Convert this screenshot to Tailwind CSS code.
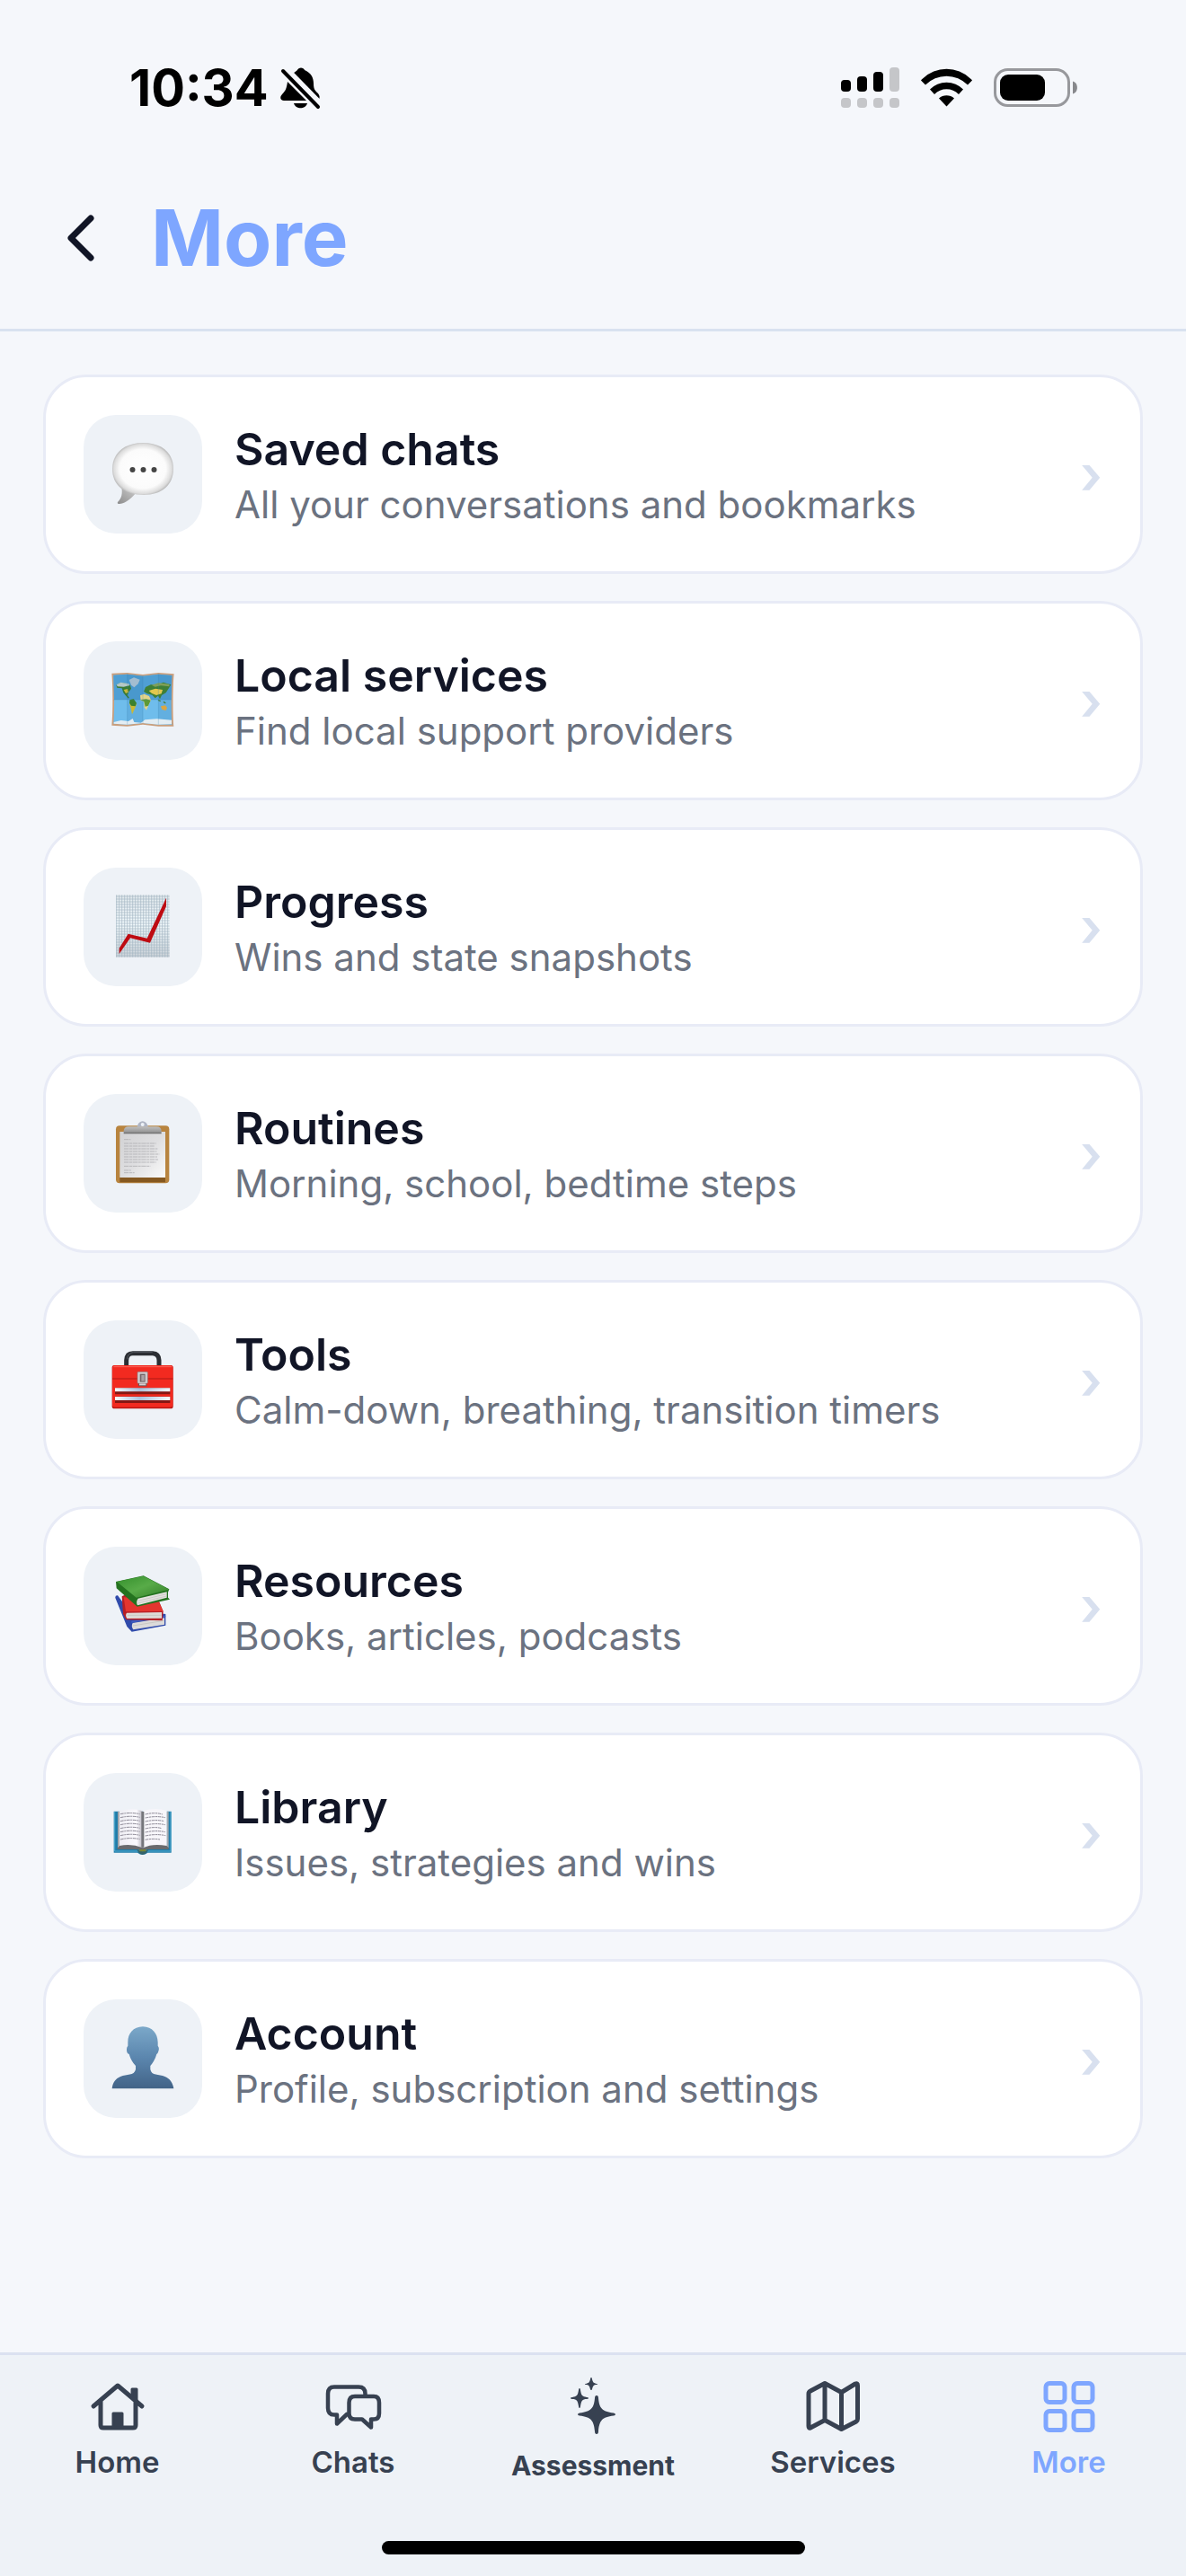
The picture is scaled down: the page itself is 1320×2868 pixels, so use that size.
<!DOCTYPE html>
<html lang="en">

<head>
    <meta charset="UTF-8">
    <meta name="viewport" content="width=device-width, initial-scale=1.0">
    <script src="https://cdn.jsdelivr.net/npm/@tailwindcss/browser@4"></script>
    <title>More</title>
</head>

<body class="flex flex-col min-h-screen bg-[#f5f7fb] font-['Inter',sans-serif] text-[#111526]">
    <!-- Status bar -->
    <div class="flex items-center justify-between h-44 pt-5 pl-36 pr-30 text-black">
        <div class="flex items-center gap-3">
            <span class="text-[56px] leading-16 font-bold">10:34</span>
            <svg class="w-12 h-12" viewBox="0 0 48 48" fill="currentColor" aria-label="Silent">
                <path d="M15 8C17 6 19 5 20 4C21 .5 27 .5 28 4C35 7 38 12 38 19C38 26 40 27 43 30C45 33 45 34 44 37Z" />
                <path d="M9 17L30 38H5C1 38 0 34 3 31C7 27 8 24 9 17Z" />
                <path d="M16 41H31C29 48 18 48 16 41Z" />
                <path d="M6 3L46 44" fill="none" stroke="#f5f7fb" stroke-width="9" />
                <path d="M4 5L43 45" fill="none" stroke="currentColor" stroke-width="4" stroke-linecap="round" />
            </svg>
        </div>
        <div class="flex items-center gap-6">
            <svg class="w-[65px] h-12" viewBox="0 0 65 48" aria-label="Signal">
                <rect x="0" y="15" width="11" height="13" rx="4" />
                <rect x="18" y="11" width="11" height="17" rx="4" />
                <rect x="36" y="6" width="11" height="22" rx="4" />
                <g fill="#c5c6c9">
                    <rect x="54" y="1" width="11" height="27" rx="4" />
                    <rect x="0" y="35" width="11" height="11" rx="4" />
                    <rect x="18" y="35" width="11" height="11" rx="4" />
                    <rect x="36" y="35" width="11" height="11" rx="4" />
                    <rect x="54" y="35" width="11" height="11" rx="4" />
                </g>
            </svg>
            <svg class="w-[57px] h-12" viewBox="0 0 57 48" aria-label="Wi-Fi">
                <path d="M0 15.500Q1 14 2 13.500A38 38 0 0 1 55 13.500Q56 14 57 15.500L52 20.500A33 33 0 0 0 5 20.500Z" />
                <path d="M10 25.500A26 26 0 0 1 47 25.500L42 31A19 19 0 0 0 15 31Z" />
                <path d="M20 35.500A13 13 0 0 1 37 35.500L28.500 44.500Z" />
            </svg>
            <svg class="w-[94px] h-12" viewBox="0 0 94 48" aria-label="Battery">
                <rect x="1.500" y="3.500" width="82" height="40" rx="14" fill="none" stroke="#97989c" stroke-width="3" />
                <rect x="7" y="9" width="50" height="29" rx="9" />
                <path d="M88 16.500C94.500 18 94.500 29 88 30.500Z" fill="#87888c" />
            </svg>
        </div>
    </div>

    <header class="flex items-center gap-12 h-[193px] px-12 pb-3 border-b-3 border-[#d9e2f0]">
        <button type="button" class="flex justify-center w-[72px]" aria-label="Back">
            <svg class="w-[72px] h-[72px]" viewBox="0 0 72 72" fill="none" stroke="currentColor" stroke-width="7" stroke-linecap="round" stroke-linejoin="round">
                <path d="M53 14L31 36L53 58" />
            </svg>
        </button>
        <h1 class="text-[87px] leading-24 font-bold text-[#7ea6ff]">More</h1>
    </header>

    <main class="flex flex-col flex-1 gap-[30px] px-12 py-12">
        <a href="#saved-chats" class="flex items-center gap-9 p-[42px] bg-white border-3 border-[#e8ebf6] rounded-[48px]">
            <span class="size-33 shrink-0 rounded-[36px] bg-[#eef2f7]">
                <svg viewBox="0 0 132 132">
                    <defs>
                        <radialGradient id="bubble" cx="50%" cy="50%" r="54%">
                            <stop offset="0" stop-color="#fff" />
                            <stop offset=".7" stop-color="#fbfbfb" />
                            <stop offset=".88" stop-color="#dcdcdc" />
                            <stop offset="1" stop-color="#a3a3a3" />
                        </radialGradient>
                        <linearGradient id="tail" x1="0" y1="1" x2="1" y2="0">
                            <stop offset="0" stop-color="#8c8c8c" />
                            <stop offset="1" stop-color="#d2d2d2" />
                        </linearGradient>
                    </defs>
                    <path d="M42 79C44 88 42 93 38 97Q37 99 40 99C48 98 54 92 60 85Z" fill="url(#tail)" />
                    <path d="M66 31C88 31 100 43 100 60C100 78 87 89 67 89C45 89 32 78 32 60C32 43 45 31 66 31Z" fill="url(#bubble)" />
                    <g fill="#454545">
                        <circle cx="54.500" cy="61" r="3" />
                        <circle cx="66.500" cy="61" r="3" />
                        <circle cx="78.500" cy="61" r="3" />
                    </g>
                </svg>
            </span>
            <span class="flex flex-col flex-1 pt-1">
                <span class="text-[50px] leading-16 font-semibold">Saved chats</span>
                <span class="text-[42px] leading-15 text-[#6b7280]">All your conversations and bookmarks</span>
            </span>
            <span class="text-[60px] leading-18 font-semibold text-[#d8e0ef]">›</span>
        </a>

        <a href="#local-services" class="flex items-center gap-9 p-[42px] bg-white border-3 border-[#e8ebf6] rounded-[48px]">
            <span class="size-33 shrink-0 rounded-[36px] bg-[#eef2f7]">
                <svg viewBox="40 42 396 396">
                    <path d="M134 149L186 147L238 153L290 147L342 151C338 180 337 290 341 326L290 326L238 320L186 326L134 323C138 280 138 190 134 149Z" fill="#c99e7c" />
                    <path d="M140 155L186 152L238 158L290 152L335 156C332 190 332 285 335 320L290 320L238 315L186 320L140 317C143 280 143 190 140 155Z" fill="#6fbdec" />
                    <path d="M140 155L186 152L238 158L290 152L335 156L333 237H142Z" fill="#4f9fd4" />
                    <path d="M186 152L238 158V315L186 320Z M290 152L335 156C332 190 332 285 335 320L290 320Z" fill="#377fb5" opacity=".22" />
                    <path d="M141 312L165 306L190 309L204 300L209 312L232 314L245 304L285 301L334 305V319L290 320L238 315L186 320L141 317Z" fill="#e3edf3" />
                    <path d="M192 171L208 163L228 170L222 184L209 196L199 188Z" fill="#a3bdd0" />
                    <path d="M149 188L163 180L184 183L196 190L199 200L191 211L187 222L193 232L188 232L173 214L168 199L152 197Z" fill="#387a35" />
                    <path d="M150 187L164 179L191 184L193 190L174 194L153 193Z" fill="#b5c8c6" />
                    <path d="M174 204L187 201L190 212L181 216Z M196 240L208 239L217 252L211 267L202 286L198 266L193 250Z" fill="#cab936" />
                    <path d="M194 238L207 234L217 248L213 259L199 257L193 248Z" fill="#3b812f" />
                    <path d="M229 223L242 218L259 225L265 238L257 255L250 272L243 263L242 244L231 239Z" fill="#e4d488" />
                    <path d="M230 238L249 235L264 239L256 257L246 260L242 243Z" fill="#5d9937" />
                    <path d="M241 210L247 195L264 187L289 187L306 179L332 187L325 198L315 214L301 222L295 235L289 224L279 232L269 221L252 217Z" fill="#3e7f36" />
                    <path d="M258 207L280 200L304 204L300 217L283 222L268 216Z" fill="#e1c74e" />
                    <path d="M267 188L290 181L326 185L327 193L298 190L279 194Z" fill="#7f9f58" />
                    <path d="M298 259L313 256L319 264L315 273L302 270Z" fill="#dba642" />
                    <path d="M289 238L297 242M307 244L314 249" stroke="#427e3b" stroke-width="4" />
                    <path d="M140 237H334M186 152V320M238 158V315M290 152V320" stroke="#3c81ad" stroke-width="1.500" opacity=".5" />
                </svg>
            </span>
            <span class="flex flex-col flex-1 pt-1">
                <span class="text-[50px] leading-16 font-semibold">Local services</span>
                <span class="text-[42px] leading-15 text-[#6b7280]">Find local support providers</span>
            </span>
            <span class="text-[60px] leading-18 font-semibold text-[#d8e0ef]">›</span>
        </a>

        <a href="#progress" class="flex items-center gap-9 p-[42px] bg-white border-3 border-[#e8ebf6] rounded-[48px]">
            <span class="size-33 shrink-0 rounded-[36px] bg-[#eef2f7]">
                <svg viewBox="40 48 396 396">
                    <defs>
                        <linearGradient id="paper" x1="0" y1="0" x2="0" y2="1">
                            <stop offset="0" stop-color="#e2e9ed" />
                            <stop offset=".45" stop-color="#f2fafd" />
                            <stop offset="1" stop-color="#ccd3d9" />
                        </linearGradient>
                    </defs>
                    <path d="M148 139H327V347H148Z" fill="url(#paper)" />
                    <path d="M150 139V347M159 139V347M168 139V347M177 139V347M186 139V347M195 139V347M204 139V347M213 139V347M222 139V347M231 139V347M240 139V347M249 139V347M258 139V347M267 139V347M276 139V347M285 139V347M294 139V347M303 139V347M312 139V347M321 139V347" stroke="#a3b5c2" stroke-width="2" />
                    <path d="M148 144H327M148 153H327M148 162H327M148 171H327M148 180H327M148 189H327M148 198H327M148 207H327M148 216H327M148 225H327M148 234H327M148 243H327M148 252H327M148 261H327M148 270H327M148 279H327M148 288H327M148 297H327M148 306H327M148 315H327M148 324H327M148 333H327M148 342H327" stroke="#a3b5c2" stroke-width="2" />
                    <path d="M159 317L189 269L252 284L316 149V177L262 299L196 283L159 336Z" fill="#be0b12" />
                </svg>
            </span>
            <span class="flex flex-col flex-1 pt-1">
                <span class="text-[50px] leading-16 font-semibold">Progress</span>
                <span class="text-[42px] leading-15 text-[#6b7280]">Wins and state snapshots</span>
            </span>
            <span class="text-[60px] leading-18 font-semibold text-[#d8e0ef]">›</span>
        </a>

        <a href="#routines" class="flex items-center gap-9 p-[42px] bg-white border-3 border-[#e8ebf6] rounded-[48px]">
            <span class="size-33 shrink-0 rounded-[36px] bg-[#eef2f7]">
                <svg viewBox="40 54 396 396">
                    <defs>
                        <linearGradient id="sheet" x1="0" y1="0" x2="1" y2="1">
                            <stop offset="0" stop-color="#d2d2d4" />
                            <stop offset=".5" stop-color="#dedee0" />
                            <stop offset="1" stop-color="#fafafa" />
                        </linearGradient>
                        <linearGradient id="clip" x1="0" y1="0" x2="0" y2="1">
                            <stop offset="0" stop-color="#bebebe" />
                            <stop offset=".7" stop-color="#999" />
                            <stop offset="1" stop-color="#636363" />
                        </linearGradient>
                    </defs>
                    <rect x="148" y="160" width="178" height="192" rx="12" fill="#b8843f" />
                    <path d="M161 332H313V349H161Z" fill="#855820" />
                    <path d="M161 180H313V333H161Z" fill="url(#sheet)" />
                    <path d="M175 206H197M175 219H282M175 228H276M175 237H287M175 246H284M175 255H293M175 264H286M175 273H289M175 282H282M175 295H263M175 309H198M175 317H210" stroke="#b0b0b3" stroke-width="2.500" stroke-dasharray="16 2 9 2" />
                    <path d="M218 164C222 161 220 147 237 145C254 147 252 161 257 164Z" fill="#aeb4c3" />
                    <circle cx="237" cy="156" r="6" fill="#eef2f7" />
                    <path d="M174 187V178Q175 163 190 163H284Q299 163 300 178V187Z" fill="url(#clip)" />
                </svg>
            </span>
            <span class="flex flex-col flex-1 pt-1">
                <span class="text-[50px] leading-16 font-semibold">Routines</span>
                <span class="text-[42px] leading-15 text-[#6b7280]">Morning, school, bedtime steps</span>
            </span>
            <span class="text-[60px] leading-18 font-semibold text-[#d8e0ef]">›</span>
        </a>

        <a href="#tools" class="flex items-center gap-9 p-[42px] bg-white border-3 border-[#e8ebf6] rounded-[48px]">
            <span class="size-33 shrink-0 rounded-[36px] bg-[#eef2f7]">
                <svg viewBox="40 45 396 396">
                    <defs>
                        <linearGradient id="drawer" x1="0" y1="0" x2="1" y2="0">
                            <stop offset="0" stop-color="#f6f8fc" />
                            <stop offset=".45" stop-color="#adc1dc" />
                            <stop offset="1" stop-color="#f5f8fc" />
                        </linearGradient>
                    </defs>
                    <path d="M183 196V178Q184 155 204 155H271Q291 156 292 178V196" fill="none" stroke="#2b2e33" stroke-width="15" />
                    <path d="M186 175Q187 154 207 151H270" fill="none" stroke="#555b62" stroke-width="3" />
                    <rect x="135" y="195" width="204" height="145" rx="8" fill="#bb1712" />
                    <rect x="136" y="195" width="202" height="140" rx="8" fill="#f22a20" />
                    <path d="M140 200H334" stroke="#fa6357" stroke-width="3" />
                    <path d="M136 240H338" stroke="#af1914" stroke-width="3" />
                    <path d="M145 270H329V292H145ZM145 299H329V321H145Z" fill="#851713" />
                    <path d="M145 271H329V283H145ZM145 300H329V312H145Z" fill="url(#drawer)" />
                    <rect x="220" y="217" width="34" height="39" rx="3" fill="#d2cecf" stroke="#8b7374" stroke-width="2" />
                    <path d="M223 256H251V265H223Z" fill="#6a5759" />
                    <path d="M226 256H248V262H226Z" fill="#d6cfd1" />
                    <path d="M228 224H246V251H228Z" fill="#756567" />
                    <path d="M233 228H243V248H233Z" fill="#aaa1a3" />
                </svg>
            </span>
            <span class="flex flex-col flex-1 pt-1">
                <span class="text-[50px] leading-16 font-semibold">Tools</span>
                <span class="text-[42px] leading-15 text-[#6b7280]">Calm-down, breathing, transition timers</span>
            </span>
            <span class="text-[60px] leading-18 font-semibold text-[#d8e0ef]">›</span>
        </a>

        <a href="#resources" class="flex items-center gap-9 p-[42px] bg-white border-3 border-[#e8ebf6] rounded-[48px]">
            <span class="size-33 shrink-0 rounded-[36px] bg-[#eef2f7]">
                <svg viewBox="40 51 396 396">
                    <defs>
                        <linearGradient id="green" x1="0" y1="0" x2="1" y2="1">
                            <stop offset="0" stop-color="#348f2c" />
                            <stop offset=".5" stop-color="#58ab48" />
                            <stop offset="1" stop-color="#327d27" />
                        </linearGradient>
                    </defs>
                    <path d="M146 222Q145 213 154 214L190 262L314 276V314L201 335L185 318Z" fill="#304bab" />
                    <path d="M204 306L310 289V311L206 328Q198 317 204 306Z" fill="#dcdbda" />
                    <path d="M200 305L314 286V281L200 299Z" fill="#405dc1" />
                    <path d="M168 217L189 207L290 229L306 267L303 298L182 295L172 276Z" fill="#b51f25" />
                    <path d="M174 220L288 228L306 267L181 268Z" fill="#e4352f" />
                    <path d="M184 272L301 270V290L185 291Q178 280 184 272Z" fill="#dedbd7" />
                    <path d="M148 168L240 148L326 193L322 203V221L328 227L219 251L150 190Z" fill="#24721f" />
                    <path d="M151 168L240 149L326 194L216 221Z" fill="url(#green)" />
                    <path d="M222 224L318 202V221L220 247Q214 235 222 224Z" fill="#e4e2df" />
                    <path d="M222 232L317 209M221 240L317 216M187 280H300M205 315L308 298" stroke="#b5b2af" stroke-width="1.500" />
                </svg>
            </span>
            <span class="flex flex-col flex-1 pt-1">
                <span class="text-[50px] leading-16 font-semibold">Resources</span>
                <span class="text-[42px] leading-15 text-[#6b7280]">Books, articles, podcasts</span>
            </span>
            <span class="text-[60px] leading-18 font-semibold text-[#d8e0ef]">›</span>
        </a>

        <a href="#library" class="flex items-center gap-9 p-[42px] bg-white border-3 border-[#e8ebf6] rounded-[48px]">
            <span class="size-33 shrink-0 rounded-[36px] bg-[#eef2f7]">
                <svg viewBox="40 42 396 396">
                    <defs>
                        <linearGradient id="page" x1="0" y1="0" x2="1" y2="0">
                            <stop offset="0" stop-color="#eeedf3" />
                            <stop offset=".75" stop-color="#faf9fd" />
                            <stop offset="1" stop-color="#b6b4be" />
                        </linearGradient>
                    </defs>
                    <path d="M141 170H333V308H254Q237 322 220 308H141Z" fill="#207da9" />
                    <path d="M144 171V303H331V171" fill="none" stroke="#50aacf" stroke-width="3" />
                    <path d="M153 290L161 281H228L238 290L247 281H315L324 290V297H250Q238 306 225 297H153Z" fill="#696a6d" />
                    <path d="M154 171H161V285L154 292ZM317 171H324V292L317 285Z" fill="#a7a8ad" />
                    <path d="M160 168Q205 157 237 169V292Q200 276 160 285Z" fill="url(#page)" />
                    <path d="M239 169Q278 155 318 168V285Q270 276 239 292Z" fill="#f7f6fa" />
                    <path d="M233 171H242V290H233Z" fill="#74757a" />
                    <path d="M218 297Q238 311 257 297Q251 313 237 315Q223 312 218 297Z" fill="#35636a" />
                    <path d="M224 298H251L246 304H229Z" fill="#7d8732" />
                    <path d="M163 179Q196 172 228 179M163 191Q196 183 228 190M163 203Q196 195 228 202M163 215Q196 207 228 214M163 227Q196 219 228 226M163 239Q196 231 228 238M163 251Q196 243 228 250M163 264Q196 256 228 263M246 180Q278 172 304 180M246 192Q282 184 313 191M246 204Q282 196 309 203M246 216Q282 208 313 215M246 228Q278 220 301 227M246 240Q282 232 313 239M246 252Q282 244 314 251M246 265Q270 260 295 264" fill="none" stroke="#8c8895" stroke-width="3" stroke-dasharray="11 2 6 2" />
                </svg>
            </span>
            <span class="flex flex-col flex-1 pt-1">
                <span class="text-[50px] leading-16 font-semibold">Library</span>
                <span class="text-[42px] leading-15 text-[#6b7280]">Issues, strategies and wins</span>
            </span>
            <span class="text-[60px] leading-18 font-semibold text-[#d8e0ef]">›</span>
        </a>

        <a href="#account" class="flex items-center gap-9 p-[42px] bg-white border-3 border-[#e8ebf6] rounded-[48px]">
            <span class="size-33 shrink-0 rounded-[36px] bg-[#eef2f7]">
                <svg viewBox="40 48 396 396">
                    <defs>
                        <linearGradient id="person" x1="0" y1="0" x2="0" y2="1">
                            <stop offset="0" stop-color="#7ba8c9" />
                            <stop offset=".5" stop-color="#5b86ae" />
                            <stop offset="1" stop-color="#426387" />
                        </linearGradient>
                    </defs>
                    <path d="M238 139C270 140 287 162 288 191V203Q294 210 290 221Q288 229 284 231C279 249 270 262 263 270V282C267 304 291 297 312 306C329 313 338 327 341 346H135C137 327 147 312 163 306C184 297 209 304 214 282V270C204 260 197 248 192 231Q185 229 184 218Q183 209 188 203V191C188 162 205 140 238 139Z" fill="url(#person)" />
                </svg>
            </span>
            <span class="flex flex-col flex-1 pt-1">
                <span class="text-[50px] leading-16 font-semibold">Account</span>
                <span class="text-[42px] leading-15 text-[#6b7280]">Profile, subscription and settings</span>
            </span>
            <span class="text-[60px] leading-18 font-semibold text-[#d8e0ef]">›</span>
        </a>
    </main>

    <!-- Tab bar -->
    <footer class="bg-[#eef2f7] border-t-3 border-[#dbe1f0] pt-[21px] pb-6">
        <nav class="grid grid-cols-[261fr_264fr_270fr_264fr_261fr] text-[33px] leading-10 font-semibold text-[#374151]">
            <a href="#home" class="flex flex-col items-center gap-1.5">
                <svg class="size-18" viewBox="0 0 72 72" fill="none" stroke="currentColor" stroke-width="5" stroke-linecap="round" stroke-linejoin="round">
                    <path d="M9 36L36 13L63 36M17 30V57Q17 60 20 60H53Q56 60 56 57V30" />
                    <path d="M52 17H57V31L52 26ZM31 44H41V60H31Z" fill="currentColor" stroke-width="3" />
                </svg>
                Home
            </a>
            <a href="#chats" class="flex flex-col items-center gap-1.5">
                <svg class="size-18" viewBox="0 0 72 72" fill="none" stroke="currentColor" stroke-width="4.500" stroke-linecap="round" stroke-linejoin="round">
                    <path d="M49.500 23V22Q49.500 14.500 42 14.500H15Q8 14.500 8 22V38Q8 45.500 15 45.500H18V55.500L29 45" />
                    <path d="M38 25H59Q65 25 65 32V44Q65 50.500 59 50.500H56V59.500L46 50.500H38Q31.500 50.500 31.500 44V32Q31.500 25 38 25Z" />
                </svg>
                Chats
            </a>
            <a href="#assessment" class="flex flex-col items-center gap-2.5 text-[30px] font-bold">
                <svg class="size-18" viewBox="0 0 72 72" fill="currentColor">
                    <path d="M40 24Q42 24 42 27C43 38 46 42 59 43.500Q61 44 61 45Q61 46 59 46.500C46 48 43 52 42 64Q42 67 40 67Q38 67 38 64C37 52 34 48 21 46.500Q19 46 19 45Q19 44 21 43.500C34 42 37 38 38 27Q38 24 40 24Z" />
                    <path d="M21 16Q22 16 22 18C23 24 24 25 29 26Q31 26 31 27Q31 28 29 28C24 28 23 30 22 36Q22 38 21 38Q20 38 20 36C19 30 18 28 13 28Q11 28 11 27Q11 26 13 26C18 25 19 24 20 18Q20 16 21 16Z" />
                    <path d="M34 4Q35 4 35 6C36 10 37 10 40 11Q41 11 41 11.500Q41 12 40 12C37 12 36 13 35 17Q35 18 34 18Q33 18 33 17C32 13 31 12 28 12Q27 12 27 11.500Q27 11 28 11C31 10 32 10 33 6Q33 4 34 4Z" />
                </svg>
                Assessment
            </a>
            <a href="#services" class="flex flex-col items-center gap-1.5">
                <svg class="size-18" viewBox="0 0 72 72" fill="none" stroke="currentColor" stroke-width="5" stroke-linecap="round" stroke-linejoin="round">
                    <path d="M9 22Q9 20 11 19L27 10.500L45.500 20.500L61 11Q63.500 10 63.500 13V50Q63.500 52 62 53L45.500 61.500L27 51.500L11 60Q9 61 9 58ZM27 10.500V51.500M45.500 20.500V61.500" />
                </svg>
                Services
            </a>
            <a href="#more" aria-current="page" class="flex flex-col items-center gap-1.5 text-[#7ea6ff]">
                <svg class="size-18" viewBox="0 0 72 72" fill="none" stroke="currentColor" stroke-width="5">
                    <rect x="10" y="10.500" width="21" height="21" rx="4" />
                    <rect x="41" y="10.500" width="21" height="21" rx="4" />
                    <rect x="10" y="41.500" width="21" height="21" rx="4" />
                    <rect x="41" y="41.500" width="21" height="21" rx="4" />
                </svg>
                More
            </a>
        </nav>
        <div class="w-[471px] h-[15px] mx-auto mt-16 rounded-full bg-black"></div>
    </footer>
</body>

</html>
